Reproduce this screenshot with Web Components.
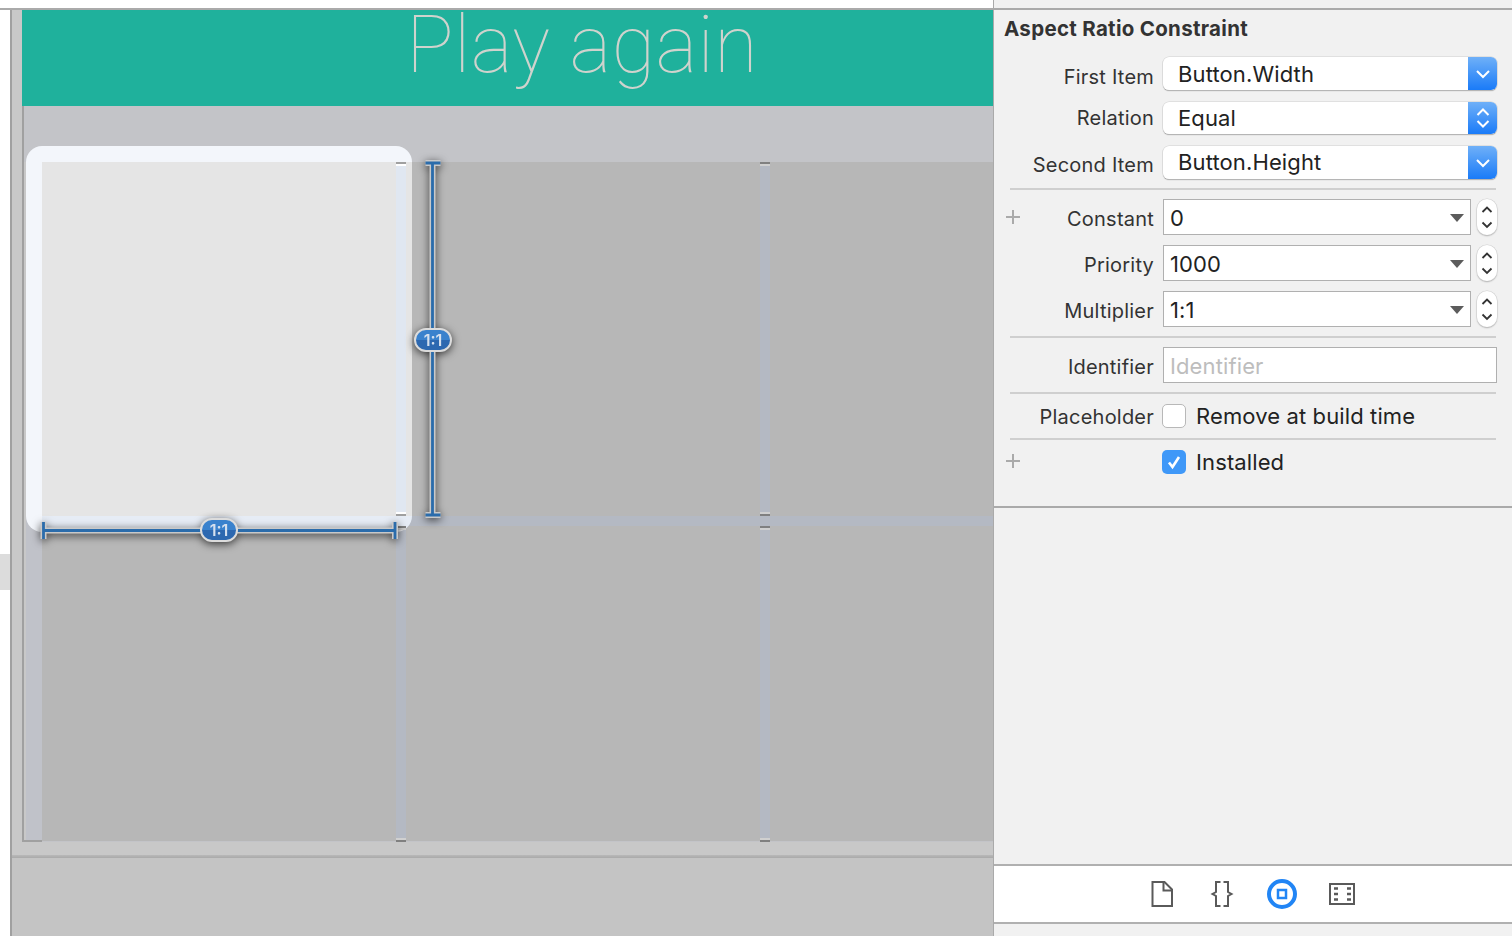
<!DOCTYPE html>
<html><head><meta charset="utf-8"><style>
html,body{margin:0;padding:0;background:#fff}
body{font-family:"Inter","Liberation Sans",sans-serif;color:#222}
</style></head><body>
<x-app>
  <x-canvas slot="canvas">
    <x-board>
      <span slot="title">Play again</span>
      <x-selection></x-selection>
      <x-tick x="396" y="162" kind="top" sel></x-tick>
      <x-tick x="396" y="512" kind="bot" sel></x-tick>
      <x-tick x="396" y="526" kind="top"></x-tick>
      <x-tick x="396" y="838" kind="bot"></x-tick>
      <x-tick x="760" y="162" kind="top"></x-tick>
      <x-tick x="760" y="512" kind="bot"></x-tick>
      <x-tick x="760" y="526" kind="top"></x-tick>
      <x-tick x="760" y="838" kind="bot"></x-tick>
      <x-constraint dir="v">1:1</x-constraint>
      <x-constraint dir="h">1:1</x-constraint>
    </x-board>
  </x-canvas>
  <x-inspector slot="inspector">
    <span slot="title">Aspect Ratio Constraint</span>
    <x-row style="margin-top:7px" h="33" ly="3"><span slot="label">First Item</span><x-popup>Button.Width</x-popup></x-row>
    <x-row style="margin-top:12px;--ty:0px" h="32" ly="0"><span slot="label">Relation</span><x-popup both>Equal</x-popup></x-row>
    <x-row style="margin-top:12px;--ty:0px" h="33" ly="2"><span slot="label">Second Item</span><x-popup>Button.Height</x-popup></x-row>
    <x-rule style="margin-top:9px"></x-rule>
    <x-row style="margin-top:9px;--pm:-7px" h="36" ly="2" plus><span slot="label">Constant</span><x-combo>0</x-combo></x-row>
    <x-row style="margin-top:10px" h="36" ly="2"><span slot="label">Priority</span><x-combo>1000</x-combo></x-row>
    <x-row style="margin-top:10px" h="36" ly="2"><span slot="label">Multiplier</span><x-combo>1:1</x-combo></x-row>
    <x-rule style="margin-top:9px"></x-rule>
    <x-row style="margin-top:9px" h="36" ly="2"><span slot="label">Identifier</span><x-field>Identifier</x-field></x-row>
    <x-rule style="margin-top:9px"></x-rule>
    <x-row style="margin-top:10px" h="24" ly="0"><span slot="label">Placeholder</span><x-check>Remove at build time</x-check></x-row>
    <x-rule style="margin-top:10px"></x-rule>
    <x-row style="margin-top:10px;--pm:-8px" h="24" ly="1" plus><x-check checked>Installed</x-check></x-row>
    <x-tabbar slot="tabs">
      <svg width="30" height="30" viewBox="0 0 30 30" fill="none" stroke="#5a5a5a" stroke-width="2"><path d="M5.5 3H17.5L25 10.5V27H5.5Z"/><path d="M16.5 3V11.5H25" /></svg>
      <svg width="30" height="30" viewBox="0 0 30 30" fill="none" stroke="#5a5a5a" stroke-width="2"><path d="M13.5 3H9V13L5.5 15L9 17V27H13.5"/><path d="M16.5 3H21V13L24.5 15L21 17V27H16.5"/></svg>
      <svg width="30" height="30" viewBox="0 0 30 30" fill="none" stroke="#2185f5"><circle cx="15" cy="15" r="13" stroke-width="4"/><rect x="11" y="11" width="8" height="8" stroke-width="2.5"/></svg>
      <svg width="30" height="30" viewBox="0 0 30 30" fill="none" stroke="#5a5a5a" stroke-width="2"><rect x="3" y="5" width="24" height="20"/><path stroke-width="2.5" d="M7 9.5h4M7 15h4M7 20.5h4M20 9.5h4M20 15h4M20 20.5h4"/></svg>
    </x-tabbar>
  </x-inspector>
</x-app>
<script>
function def(name, css, html, extra){
  customElements.define(name, class extends HTMLElement{
    constructor(){super();const r=this.attachShadow({mode:'open'});r.innerHTML='<style>'+css+'</style>'+(typeof html==='function'?html(this):html);}
    connectedCallback(){ if(extra) extra(this); }
  });
}
def('x-app',':host{display:flex;width:1512px;height:936px;overflow:hidden}','<slot name="canvas"></slot><slot name="inspector"></slot>');
def('x-canvas',`:host{display:block;width:993px;height:936px;overflow:hidden;flex:none;background:#fff}
.top{height:8px;background:#fff;border-bottom:2px solid #aaa}
.main{display:flex;height:926px}
.rail{width:10px;flex:none;padding-top:544px;box-sizing:border-box}
.patch{height:36px;background:#dcdcdc}
.scene{flex:1;border-left:2px solid #a0a0a0;background:#c8c8c8;display:flex;flex-direction:column;min-width:0}
.pad{padding-left:10px;width:1120px}
.line{height:3px;margin-top:13px;background:linear-gradient(#b9b9b9,#a9a9a9)}
.rest{flex:1;background:#c4c4c4}`,
`<div class="top"></div><div class="main"><div class="rail"><div class="patch"></div></div><div class="scene"><div class="pad"><slot></slot></div><div class="line"></div><div class="rest"></div></div></div>`);
def('x-board',`:host{display:block;position:relative;width:1120px}
.head{height:96px;background:#1fb19c;text-align:center;font:100 79px/71px "Roboto",sans-serif;letter-spacing:.4px;color:#cfd3cd}
.body{display:flex;height:736px;border-left:2px solid #a0a0a0;background:#c3c4c8;box-sizing:border-box}
.gutter{width:18px;flex:none;border-bottom:2px solid #a0a0a0;box-sizing:border-box;background:linear-gradient(#c8c8c8,#c8c8c8) 0 56px/2px 100% no-repeat,linear-gradient(#c0c2c9,#c0c2c9) 2px 56px/16px 100% no-repeat}
.area{flex:1;padding-top:56px;height:735px;box-sizing:border-box}
.grid{display:grid;grid-template-columns:354px 354px 354px;grid-template-rows:354px 315px;gap:10px;background:#b4b9c3;width:1082px}
.grid div{background:#b7b7b7}`,
`<div class="head"><slot name="title"></slot></div><div class="body"><div class="gutter"></div><div class="area"><div class="grid"><div></div><div></div><div></div><div></div><div></div><div></div></div></div></div><slot></slot>`);
def('x-selection',`:host{position:absolute;left:4px;top:136px;width:386px;height:386px;border-radius:16px;
background:linear-gradient(#f3f6fb,#f3f6fb) 0 0/100% 16px no-repeat,linear-gradient(#f3f6fb,#f3f6fb) 0 0/16px 100% no-repeat,linear-gradient(#e0e7f1,#e0e7f1) 370px 16px/10px 354px no-repeat,linear-gradient(#e6ecf5,#e6ecf5) 16px 370px/100% 12px no-repeat,rgba(255,255,255,.64)}`,'');
def('x-tick',`:host{position:absolute;width:10px;height:4px;display:flex;flex-direction:column}
i{flex:1;display:block}`,
h=>{const sel=h.hasAttribute('sel');const lt=sel?'#fff':'#d0d0d0',dk=sel?'#a0a0a0':'#808080';const top=h.getAttribute('kind')==='top';
return `<i style="background:${top?dk:lt}"></i><i style="background:${top?lt:dk}"></i>`},
h=>{h.style.left=(+h.getAttribute('x')-22)+'px';h.style.top=(+h.getAttribute('y')-10)+'px'});
def('x-constraint',`:host{position:absolute;display:block;filter:drop-shadow(0 2px 4px rgba(0,0,0,.7))}
:host([dir=v]){left:402px;top:148px;width:18px;height:362px}
:host([dir=h]){left:16px;top:510px;width:362px;height:21px}
svg{position:absolute;left:0;top:0;overflow:visible}
.pill{position:absolute;box-sizing:border-box;width:38px;height:24px;border-radius:12px;border:2px solid #dcdcdc;background:linear-gradient(#3a82cd 50%,#2d68b0 50%);color:#d5e0ee;font:600 16px/20px "Inter",sans-serif;text-align:center}
:host([dir=v]) .pill{left:-10px;top:170px}
:host([dir=h]) .pill{left:162px;top:-2px}`,
h=>{const v=h.getAttribute('dir')==='v';
const d=v?'M1.5 5H16.5M1.5 357H16.5M8.5 5V357':'M5.5 2V19M357 2V19M5.5 10.5H357';
return `<svg width="${v?18:362}" height="${v?362:21}" fill="none"><path d="${d}" stroke="#c9c9c9" stroke-width="6"/><path d="${d}" stroke="#2b6cab" stroke-width="2.8"/></svg><div class="pill"><slot></slot></div>`});
def('x-inspector',`:host{display:flex;flex-direction:column;width:519px;height:936px;flex:none;box-sizing:border-box;border-left:1px solid #aaa;background:#f1f1f1;font:400 20px/26px "Inter",sans-serif;letter-spacing:.12px;color:#222}
.top{height:8px;border-bottom:2px solid #aaa}
.title{height:40px;box-sizing:border-box;padding:6px 0 0 10px;font-weight:700;font-size:20.5px;letter-spacing:.3px;line-height:26px;color:#333}
.form{height:456px;border-bottom:2px solid #aaa}
.gap{flex:1}`,
`<div class="top"></div><div class="title"><slot name="title"></slot></div><div class="form"><slot></slot></div><div class="gap"></div><slot name="tabs"></slot>`);
def('x-row',`:host{display:grid;grid-template-columns:159px 1fr;column-gap:10px;padding-right:15px;position:relative}
.l{display:flex;align-items:center;justify-content:flex-end;color:#333;white-space:nowrap;height:100%;letter-spacing:.22px}
.l span{display:block;position:relative;margin-right:-1px}
.plus{position:absolute;left:12px;top:50%;margin-top:var(--pm,-7px);width:14px;height:14px}`,
h=>`<div class="l"><span style="top:${h.getAttribute('ly')||0}px"><slot name="label"></slot></span></div><div><slot></slot></div>`+(h.hasAttribute('plus')?'<svg class="plus" viewBox="0 0 14 14"><path d="M7 0V14M0 7H14" stroke="#aaa" stroke-width="2"/></svg>':''),
h=>{h.style.height=h.getAttribute('h')+'px'});
def('x-rule',':host{display:block;height:2px;background:#cfcfcf;margin-left:16px;margin-right:16px}','');
def('x-popup',`:host{display:flex;height:100%;box-sizing:border-box;background:#fff;border-radius:6px;box-shadow:0 0 0 .5px #cfcfcf,0 1px 1px rgba(0,0,0,.4);overflow:hidden;color:#222;font-size:22px;line-height:32px}
.t{flex:1;padding-left:15px;margin-top:var(--ty,1px)}
.tab{width:29px;flex:none;background:linear-gradient(#6fb0f8,#1a7bf8);display:flex;align-items:center;justify-content:center}`,
h=>`<div class="t"><slot></slot></div><div class="tab">`+(h.hasAttribute('both')?'<svg width="16" height="24" fill="none" stroke="#fff" stroke-width="2"><path d="M2.5 9L8 3.5L13.5 9M2.5 15L8 20.5L13.5 15"/></svg>':'<svg width="16" height="10" fill="none" stroke="#fff" stroke-width="2"><path d="M2 2L8 8L14 2"/></svg>')+`</div>`);
def('x-combo',`:host{display:flex;height:100%;gap:6px;font-size:22px;line-height:33px;color:#222}
.b{flex:1;display:flex;align-items:center;box-sizing:border-box;border:1px solid #b0b0b0;background:#fff;padding:2px 0 0 6px;position:relative;height:36px}
.b svg{position:absolute;right:6px;top:14px}
.s{width:20px;flex:none;height:36px;border-radius:10px;background:#fff;box-shadow:0 0 0 .5px #d0d0d0,0 1px 1.5px rgba(0,0,0,.35)}`,
`<div class="b"><slot></slot><svg width="14" height="8"><path d="M0 0H14L7 8Z" fill="#5c5c5c"/></svg></div><div class="s"><svg width="20" height="36" fill="none" stroke="#333" stroke-width="1.8"><path d="M5.5 13L10 8.5L14.5 13M5.5 23.5L10 28L14.5 23.5"/></svg></div>`);
def('x-field',`:host{display:flex;align-items:center;box-sizing:border-box;height:36px;border:1px solid #b0b0b0;background:#fff;padding:2px 0 0 6px;color:#bdbdbd;font-size:22px;line-height:32px}`,'<slot></slot>');
def('x-check',`:host{display:flex;align-items:center;gap:10px;margin-left:-1px;height:24px;color:#222;font-size:22px;white-space:nowrap}
.c{width:24px;height:24px;box-sizing:border-box;border-radius:5px;background:#fff;border:1px solid #b8b8b8;flex:none}
:host([checked]) .c{background:#3f98f8;border:none}`,
h=>`<div class="c">`+(h.hasAttribute('checked')?'<svg width="24" height="24" fill="none" stroke="#fff" stroke-width="2.6"><path d="M7 12.5L10.5 17L17 7"/></svg>':'')+`</div><span><slot></slot></span>`);
def('x-tabbar',`:host{display:flex;justify-content:center;align-items:center;height:56px;background:#fff;border-top:2px solid #b0b0b0;border-bottom:2px solid #b0b0b0;margin-bottom:12px;padding-right:2px}
::slotted(svg){margin:0 15px}`,'<slot></slot>');
</script>
</body></html>
